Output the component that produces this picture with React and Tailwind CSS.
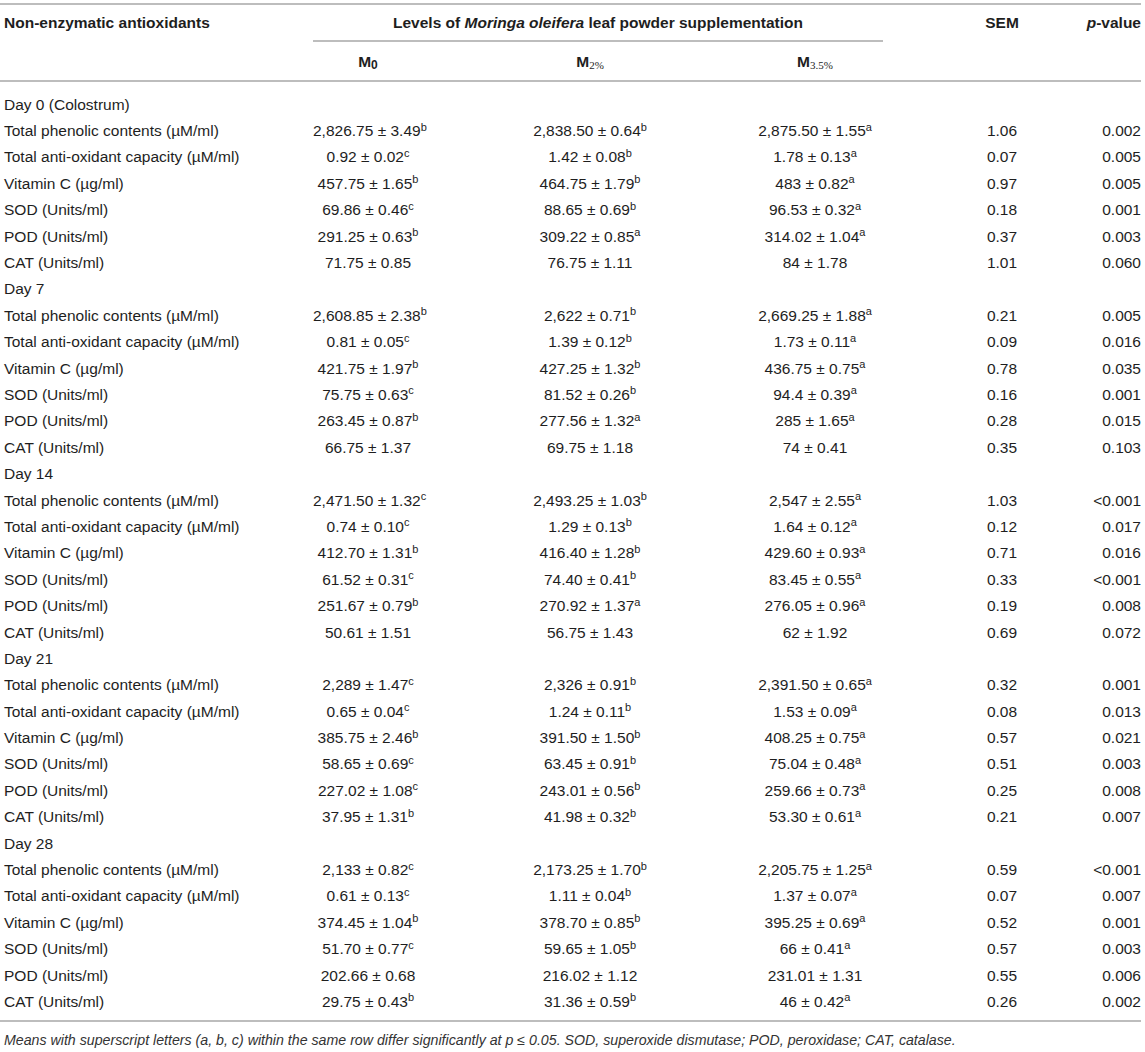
import React from "react";

const groups = [
  {
    day: "Day 0 (Colostrum)",
    rows: [
      ["2,826.75 ± 3.49^b", "2,838.50 ± 0.64^b", "2,875.50 ± 1.55^a", "1.06", "0.002"],
      ["0.92 ± 0.02^c", "1.42 ± 0.08^b", "1.78 ± 0.13^a", "0.07", "0.005"],
      ["457.75 ± 1.65^b", "464.75 ± 1.79^b", "483 ± 0.82^a", "0.97", "0.005"],
      ["69.86 ± 0.46^c", "88.65 ± 0.69^b", "96.53 ± 0.32^a", "0.18", "0.001"],
      ["291.25 ± 0.63^b", "309.22 ± 0.85^a", "314.02 ± 1.04^a", "0.37", "0.003"],
      ["71.75 ± 0.85", "76.75 ± 1.11", "84 ± 1.78", "1.01", "0.060"],
    ],
  },
  {
    day: "Day 7",
    rows: [
      ["2,608.85 ± 2.38^b", "2,622 ± 0.71^b", "2,669.25 ± 1.88^a", "0.21", "0.005"],
      ["0.81 ± 0.05^c", "1.39 ± 0.12^b", "1.73 ± 0.11^a", "0.09", "0.016"],
      ["421.75 ± 1.97^b", "427.25 ± 1.32^b", "436.75 ± 0.75^a", "0.78", "0.035"],
      ["75.75 ± 0.63^c", "81.52 ± 0.26^b", "94.4 ± 0.39^a", "0.16", "0.001"],
      ["263.45 ± 0.87^b", "277.56 ± 1.32^a", "285 ± 1.65^a", "0.28", "0.015"],
      ["66.75 ± 1.37", "69.75 ± 1.18", "74 ± 0.41", "0.35", "0.103"],
    ],
  },
  {
    day: "Day 14",
    rows: [
      ["2,471.50 ± 1.32^c", "2,493.25 ± 1.03^b", "2,547 ± 2.55^a", "1.03", "<0.001"],
      ["0.74 ± 0.10^c", "1.29 ± 0.13^b", "1.64 ± 0.12^a", "0.12", "0.017"],
      ["412.70 ± 1.31^b", "416.40 ± 1.28^b", "429.60 ± 0.93^a", "0.71", "0.016"],
      ["61.52 ± 0.31^c", "74.40 ± 0.41^b", "83.45 ± 0.55^a", "0.33", "<0.001"],
      ["251.67 ± 0.79^b", "270.92 ± 1.37^a", "276.05 ± 0.96^a", "0.19", "0.008"],
      ["50.61 ± 1.51", "56.75 ± 1.43", "62 ± 1.92", "0.69", "0.072"],
    ],
  },
  {
    day: "Day 21",
    rows: [
      ["2,289 ± 1.47^c", "2,326 ± 0.91^b", "2,391.50 ± 0.65^a", "0.32", "0.001"],
      ["0.65 ± 0.04^c", "1.24 ± 0.11^b", "1.53 ± 0.09^a", "0.08", "0.013"],
      ["385.75 ± 2.46^b", "391.50 ± 1.50^b", "408.25 ± 0.75^a", "0.57", "0.021"],
      ["58.65 ± 0.69^c", "63.45 ± 0.91^b", "75.04 ± 0.48^a", "0.51", "0.003"],
      ["227.02 ± 1.08^c", "243.01 ± 0.56^b", "259.66 ± 0.73^a", "0.25", "0.008"],
      ["37.95 ± 1.31^b", "41.98 ± 0.32^b", "53.30 ± 0.61^a", "0.21", "0.007"],
    ],
  },
  {
    day: "Day 28",
    rows: [
      ["2,133 ± 0.82^c", "2,173.25 ± 1.70^b", "2,205.75 ± 1.25^a", "0.59", "<0.001"],
      ["0.61 ± 0.13^c", "1.11 ± 0.04^b", "1.37 ± 0.07^a", "0.07", "0.007"],
      ["374.45 ± 1.04^b", "378.70 ± 0.85^b", "395.25 ± 0.69^a", "0.52", "0.001"],
      ["51.70 ± 0.77^c", "59.65 ± 1.05^b", "66 ± 0.41^a", "0.57", "0.003"],
      ["202.66 ± 0.68", "216.02 ± 1.12", "231.01 ± 1.31", "0.55", "0.006"],
      ["29.75 ± 0.43^b", "31.36 ± 0.59^b", "46 ± 0.42^a", "0.26", "0.002"],
    ],
  },
];

const labels = [
  "Total phenolic contents (µM/ml)",
  "Total anti-oxidant capacity (µM/ml)",
  "Vitamin C (µg/ml)",
  "SOD (Units/ml)",
  "POD (Units/ml)",
  "CAT (Units/ml)",
];

function Val({ v }) {
  const [main, sup] = v.split("^");
  return (
    <span>
      {main}
      {sup && <sup className="text-[11px] top-[-0.5em]">{sup}</sup>}
    </span>
  );
}

const grid = "grid grid-cols-[313px_110px_334px_126px_178px_80px]";

function Row({ label, vals }) {
  return (
    <div className={`${grid} h-[26.4px] items-center`}>
      <div className="pl-[4px] whitespace-nowrap">{label}</div>
      {vals ? (
        <>
          <div className="text-center whitespace-nowrap"><Val v={vals[0]} /></div>
          <div className="text-center whitespace-nowrap"><Val v={vals[1]} /></div>
          <div className="text-center whitespace-nowrap pr-[10px]"><Val v={vals[2]} /></div>
          <div className="text-center pl-[60px]">{vals[3]}</div>
          <div className="text-right">{vals[4]}</div>
        </>
      ) : (
        <div className="col-span-5" />
      )}
    </div>
  );
}

export default function App() {
  return (
    <div
      className="w-[1141px] bg-white text-[#1e1e1e] text-[15.5px] leading-[19px]"
      style={{ fontFamily: '"Liberation Sans", Arial, sans-serif' }}
    >
      <div className="h-[3px]" />
      <div className="h-[2px] bg-[#bdbdbd]" />
      {/* header row 1 */}
      <div className={`${grid} font-bold`}>
        <div className="pl-[4px] h-[35px] flex items-center whitespace-nowrap">Non-enzymatic antioxidants</div>
        <div className="col-span-3 h-[37px] border-b-2 border-[#bdbdbd] flex items-center justify-center">
          <span className="whitespace-nowrap">
            Levels of <i>Moringa oleifera</i> leaf powder supplementation
          </span>
        </div>
        <div className="h-[35px] flex items-center justify-center pl-[60px]">SEM</div>
        <div className="h-[35px] flex items-center justify-end">
          <span>
            <i>p</i>-value
          </span>
        </div>
      </div>
      {/* header row 2 */}
      <div className={`${grid} font-bold h-[38px] items-center`}>
        <div />
        <div className="text-center">
          M<sub className="text-[12px] bottom-[-0.2em]">0</sub>
        </div>
        <div className="text-center">
          M
          <sub
            className="text-[11px] font-normal bottom-[-0.25em]"
            style={{ fontFamily: '"Liberation Serif", serif' }}
          >
            2%
          </sub>
        </div>
        <div className="text-center pr-[10px]">
          M
          <sub
            className="text-[11px] font-normal bottom-[-0.25em]"
            style={{ fontFamily: '"Liberation Serif", serif' }}
          >
            3.5%
          </sub>
        </div>
        <div />
        <div />
      </div>
      <div className="h-[2px] bg-[#bdbdbd]" />
      {/* body */}
      <div className="pt-[9px] pb-[5px]">
        {groups.map((g) => (
          <React.Fragment key={g.day}>
            <Row label={g.day} />
            {g.rows.map((r, i) => (
              <Row key={i} label={labels[i]} vals={r} />
            ))}
          </React.Fragment>
        ))}
      </div>
      <div className="h-[2px] bg-[#bdbdbd]" />
      <div className="pt-[9px] pl-[4px] text-[14.2px] italic text-[#333] whitespace-nowrap">
        Means with superscript letters (a, b, c) within the same row differ significantly at p ≤ 0.05. SOD, superoxide dismutase; POD, peroxidase; CAT, catalase.
      </div>
    </div>
  );
}
